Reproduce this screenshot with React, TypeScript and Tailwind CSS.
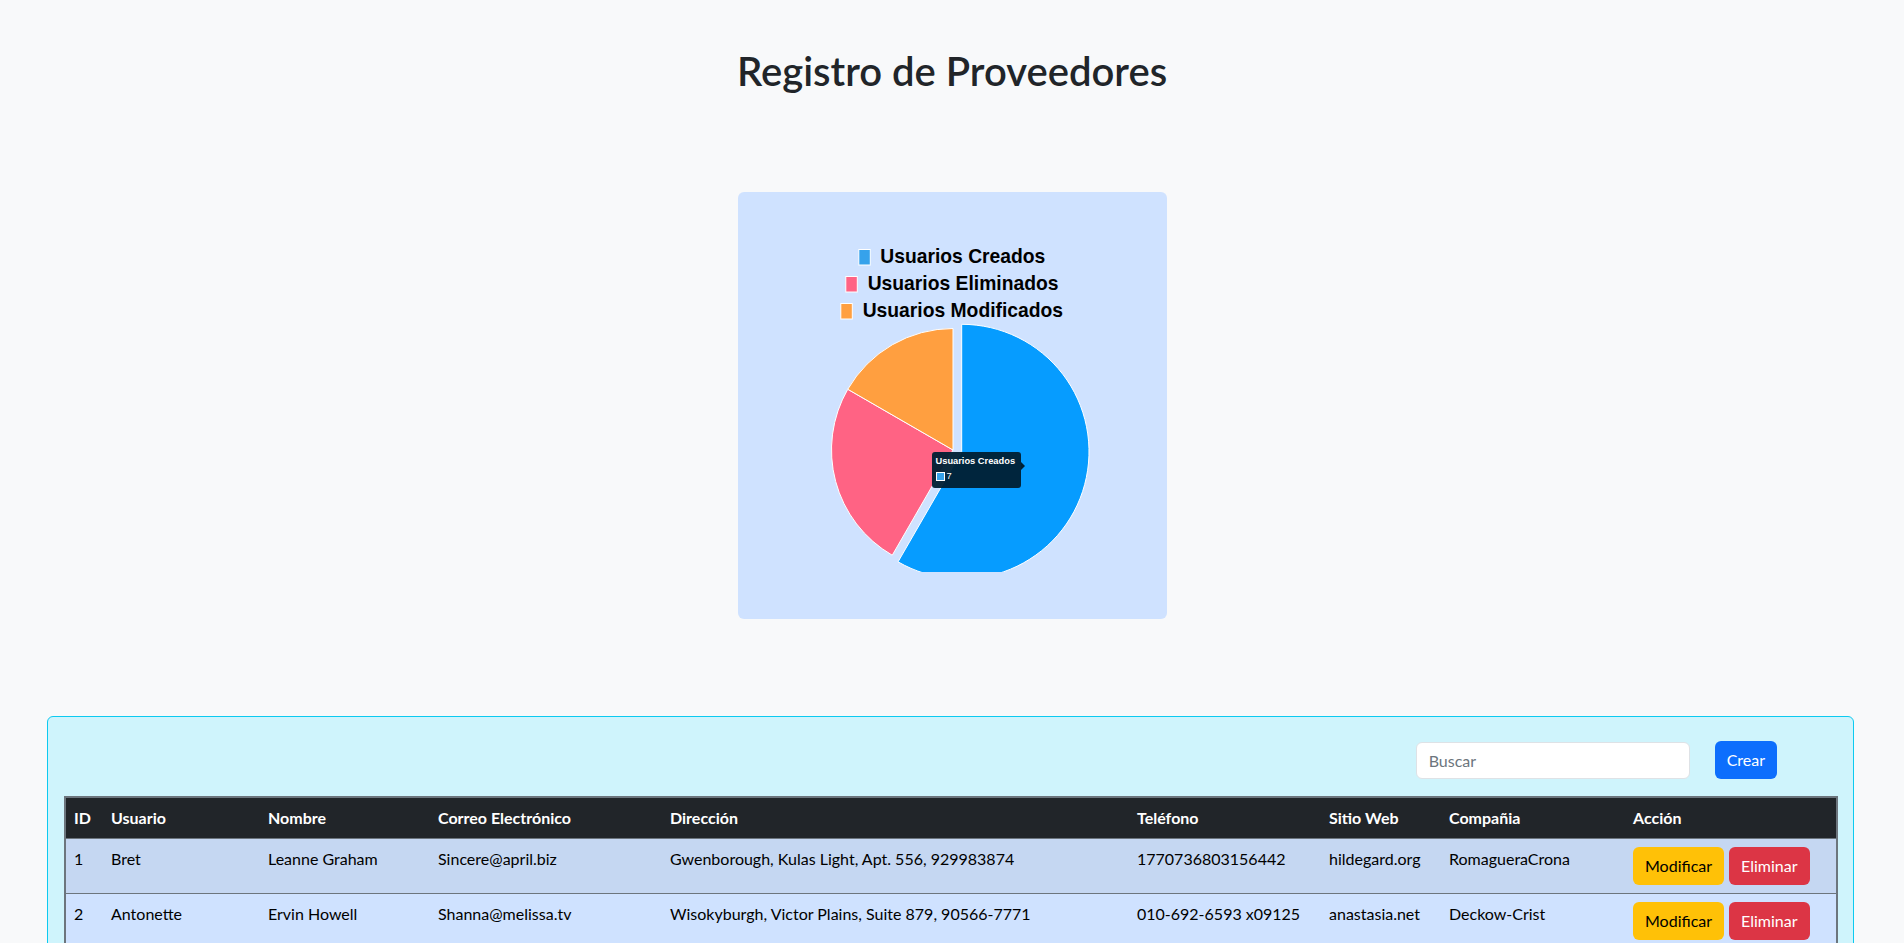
import React from 'react';

type Proveedor = {
  id: number;
  usuario: string;
  nombre: string;
  correo: string;
  direccion: string;
  telefono: string;
  web: string;
  compania: string;
};

const proveedores: Proveedor[] = [
  { id: 1, usuario: 'Bret', nombre: 'Leanne Graham', correo: 'Sincere@april.biz', direccion: 'Gwenborough, Kulas Light, Apt. 556, 929983874', telefono: '1770736803156442', web: 'hildegard.org', compania: 'RomagueraCrona' },
  { id: 2, usuario: 'Antonette', nombre: 'Ervin Howell', correo: 'Shanna@melissa.tv', direccion: 'Wisokyburgh, Victor Plains, Suite 879, 90566-7771', telefono: '010-692-6593 x09125', web: 'anastasia.net', compania: 'Deckow-Crist' },
];

const columnas = ['ID', 'Usuario', 'Nombre', 'Correo Electrónico', 'Dirección', 'Teléfono', 'Sitio Web', 'Compañia', 'Acción'];
const anchos = [38, 157, 170, 232, 467, 192, 120, 184, 212];

const leyenda = [
  { label: 'Usuarios Creados', color: '#36a2eb', box: 120.3, text: 142.3, y: 57 },
  { label: 'Usuarios Eliminados', color: '#ff6384', box: 107.3, text: 129.7, y: 84 },
  { label: 'Usuarios Modificados', color: '#ff9f40', box: 102.3, text: 124.7, y: 111 },
];

const Grafico: React.FC = () => (
  <div className="relative mx-auto w-[429px] h-[427px] bg-[#cfe2ff] rounded-md">
    <svg width="429" height="380" viewBox="0 0 429 380" className="block">
      {leyenda.map((l) => (
        <g key={l.label}>
          <rect x={l.box + 0.5} y={l.y + 0.5} width="11.5" height="15.5" fill={l.color} stroke="#ffffff" strokeWidth="1" />
          <text x={l.text} y={l.y + 13.5} fontFamily="'Liberation Sans', Arial, sans-serif" fontWeight="bold" fontSize="19.3" fill="#000">
            {l.label}
          </text>
        </g>
      ))}
      <path d="M215 258 L154.25 363.22 A121.5 121.5 0 0 1 109.78 197.25 Z" fill="#ff6384" stroke="#ffffff" strokeWidth="1" />
      <path d="M215 258 L109.78 197.25 A121.5 121.5 0 0 1 215 136.5 Z" fill="#ff9f40" stroke="#ffffff" strokeWidth="1" />
      <path d="M223.7 259.6 L223.7 132.3 A127.3 127.3 0 1 1 160.05 369.84 Z" fill="#069cff" stroke="#ffffff" strokeWidth="1" />
    </svg>
    {/* tooltip sobre el gráfico */}
    <div className="absolute left-[194px] top-[260px] w-[89px] h-[36px] rounded-[3px] bg-[#001f33]/95 px-[4px] pt-[4px] font-['Liberation_Sans',Arial,sans-serif] text-white text-[9.3px] leading-[11px]">
      <div className="font-bold">Usuarios Creados</div>
      <div className="flex items-center mt-[4px]">
        <span className="inline-block w-[9px] h-[9px] bg-[#36a2eb] border border-white"></span>
        <span className="ml-[2px]">7</span>
      </div>
      <span className="absolute right-[-4px] top-[10px] w-0 h-0 border-y-[4px] border-y-transparent border-l-[4px] border-l-[#001f33]"></span>
    </div>
  </div>
);

const TablaProveedores: React.FC = () => (
  <div className="mx-[47px] mr-[50px] mt-[97px] bg-[#cff4fc] border border-[#0dcaf0] rounded-md px-4 pt-[24px] pb-4">
    <div className="flex justify-end items-center gap-[25px] pr-[60px] mb-[17px]">
      <input
        type="text"
        placeholder="Buscar"
        className="w-[274px] h-[37px] bg-white border border-[#dee2e6] rounded-md px-3 text-base text-[#212529] placeholder:text-[#6c757d] outline-none"
      />
      <button className="h-[38px] px-3 rounded-md bg-[#0d6efd] text-white text-base">Crear</button>
    </div>
    <table className="w-full table-fixed border-collapse border-2 border-[#6c757d] text-base text-black">
      <colgroup>
        {anchos.map((w, i) => (
          <col key={i} style={{ width: w }} />
        ))}
      </colgroup>
      <thead>
        <tr className="bg-[#212529] text-white">
          {columnas.map((c) => (
            <th key={c} className="text-left font-bold px-2 py-2 leading-6 border-b border-[#6c757d]">
              {c}
            </th>
          ))}
        </tr>
      </thead>
      <tbody>
        {proveedores.map((p, i) => (
          <tr key={p.id} className={i % 2 === 0 ? 'bg-[#c5d7f2]' : 'bg-[#cfe2ff]'}>
            <td className="align-top p-2 leading-6 border-b border-[#6c757d]">{p.id}</td>
            <td className="align-top p-2 leading-6 border-b border-[#6c757d]">{p.usuario}</td>
            <td className="align-top p-2 leading-6 border-b border-[#6c757d]">{p.nombre}</td>
            <td className="align-top p-2 leading-6 border-b border-[#6c757d]">{p.correo}</td>
            <td className="align-top p-2 leading-6 border-b border-[#6c757d]">{p.direccion}</td>
            <td className="align-top p-2 leading-6 border-b border-[#6c757d]">{p.telefono}</td>
            <td className="align-top p-2 leading-6 border-b border-[#6c757d]">{p.web}</td>
            <td className="align-top p-2 leading-6 border-b border-[#6c757d]">{p.compania}</td>
            <td className="align-top p-2 leading-6 border-b border-[#6c757d] whitespace-nowrap">
              <div className="flex gap-[5px]">
                <button className="h-[38px] px-3 rounded-md bg-[#ffc107] text-black">Modificar</button>
                <button className="h-[38px] px-3 rounded-md bg-[#dc3545] text-white">Eliminar</button>
              </div>
            </td>
          </tr>
        ))}
      </tbody>
    </table>
  </div>
);

export default function App() {
  return (
    <div className="min-h-screen bg-[#f8f9fa] font-[Lato,sans-serif] text-[#212529]">
      <h1 className="pt-[47px] text-center text-[40px] leading-[48px] font-semibold">Registro de Proveedores</h1>
      <div className="mt-[97px]">
        <Grafico />
      </div>
      <TablaProveedores />
    </div>
  );
}
